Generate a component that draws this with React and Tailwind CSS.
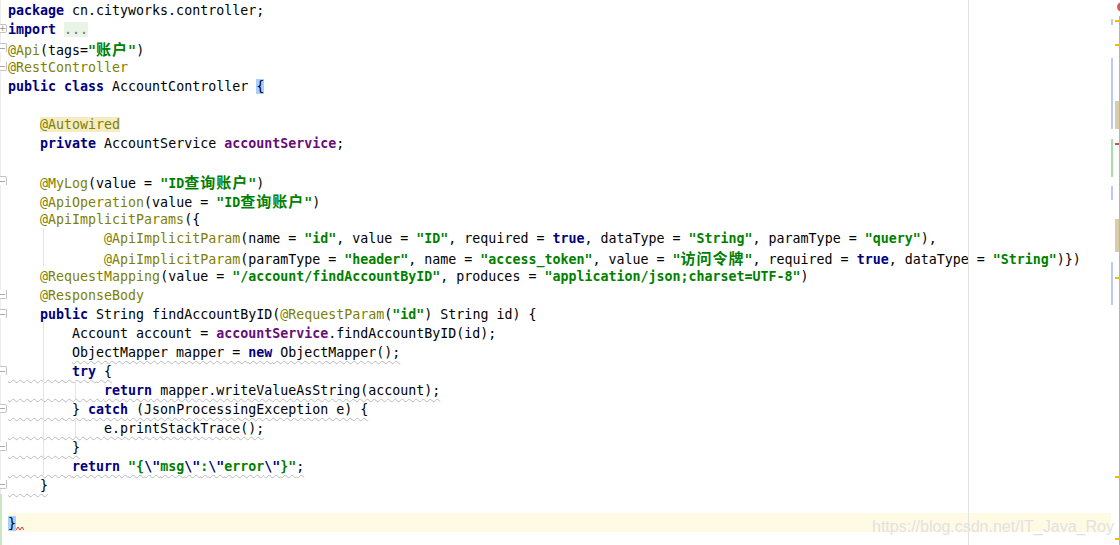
import React from "react";

const STYLE = {
  p: "text-black",
  k: "text-[#000080] font-bold",
  s: "text-[#008000] font-bold",
  a: "text-[#808000]",
  f: "text-[#660e7a] font-bold",
  z: "text-[#008000] font-bold font-['Noto_Sans_CJK_SC',sans-serif] text-[15px] tracking-[1px] leading-[17px]",
  fold: "text-[#707070] bg-[#e9f3e6]",
  auto: "text-[#808000] bg-[#f6ecc3]",
  brace: "text-black bg-[#a6d0ff]",
};

// indent guide backgrounds
const G1 = "bg-[linear-gradient(to_right,transparent_35px,#e4e4e4_35px,#e4e4e4_36px,transparent_36px)]";
const G2 =
  "bg-[linear-gradient(to_right,transparent_35px,#e4e4e4_35px,#e4e4e4_36px,transparent_36px,transparent_67px,#e4e4e4_67px,#e4e4e4_68px,transparent_68px)]";

// w: index of the first token that carries the grey wavy underline
const lines = [
  { t: [["k", "package"], ["p", " cn.cityworks.controller;"]] },
  { t: [["k", "import"], ["p", " "], ["fold", "..."]] },
  { t: [["a", "@Api"], ["p", "(tags="], ["s", '"'], ["z", "账户"], ["s", '"'], ["p", ")"]] },
  { t: [["a", "@RestController"]] },
  { t: [["k", "public class"], ["p", " AccountController "], ["brace", "{"]] },
  { t: [] },
  { t: [["p", "    "], ["auto", "@Autowired"]] },
  { t: [["p", "    "], ["k", "private"], ["p", " AccountService "], ["f", "accountService"], ["p", ";"]] },
  { t: [] },
  { t: [["p", "    "], ["a", "@MyLog"], ["p", "(value = "], ["s", '"ID'], ["z", "查询账户"], ["s", '"'], ["p", ")"]] },
  { t: [["p", "    "], ["a", "@ApiOperation"], ["p", "(value = "], ["s", '"ID'], ["z", "查询账户"], ["s", '"'], ["p", ")"]] },
  { t: [["p", "    "], ["a", "@ApiImplicitParams"], ["p", "({"]] },
  {
    g: G1,
    t: [
      ["p", "            "], ["a", "@ApiImplicitParam"], ["p", "(name = "], ["s", '"id"'],
      ["p", ", value = "], ["s", '"ID"'], ["p", ", required = "], ["k", "true"],
      ["p", ", dataType = "], ["s", '"String"'], ["p", ", paramType = "], ["s", '"query"'], ["p", "),"],
    ],
  },
  {
    g: G1,
    t: [
      ["p", "            "], ["a", "@ApiImplicitParam"], ["p", "(paramType = "], ["s", '"header"'],
      ["p", ", name = "], ["s", '"access_token"'], ["p", ", value = "], ["s", '"'], ["z", "访问令牌"],
      ["s", '"'], ["p", ", required = "], ["k", "true"], ["p", ", dataType = "], ["s", '"String"'], ["p", ")})"],
    ],
  },
  {
    t: [
      ["p", "    "], ["a", "@RequestMapping"], ["p", "(value = "], ["s", '"/account/findAccountByID"'],
      ["p", ", produces = "], ["s", '"application/json;charset=UTF-8"'], ["p", ")"],
    ],
  },
  { t: [["p", "    "], ["a", "@ResponseBody"]] },
  {
    t: [
      ["p", "    "], ["k", "public"], ["p", " String findAccountByID("], ["a", "@RequestParam"],
      ["p", "("], ["s", '"id"'], ["p", ") String id) {"],
    ],
  },
  { g: G1, t: [["p", "        Account account = "], ["f", "accountService"], ["p", ".findAccountByID(id);"]] },
  { g: G1, t: [["p", "        "], ["p", "ObjectMapper mapper = "], ["k", "new"], ["p", " ObjectMapper();"]], w: 1 },
  { g: G1, t: [["p", "        "], ["k", "try"], ["p", " {"]], w: 0 },
  { g: G2, t: [["p", "            "], ["k", "return"], ["p", " mapper.writeValueAsString(account);"]], w: 0 },
  { g: G1, t: [["p", "        } "], ["k", "catch"], ["p", " (JsonProcessingException e) {"]], w: 0 },
  { g: G2, t: [["p", "            e.printStackTrace();"]], w: 0 },
  { g: G1, t: [["p", "        }"]], w: 0 },
  {
    g: G1,
    t: [
      ["p", "        "], ["k", "return"], ["p", " "], ["s", '"{'], ["k", '\\"'], ["s", "msg"], ["k", '\\"'],
      ["s", ":"], ["k", '\\"'], ["s", "error"], ["k", '\\"'], ["s", '}"'], ["p", ";"],
    ],
    w: 0,
  },
  { t: [["p", "    }"]], w: 0 },
  { t: [] },
  { t: [["brace", "}"]], caret: true, squiggle: true },
];

// fold markers in the gutter (line index, kind)
const folds = { 1: "plus", 2: "top", 3: "bottom", 9: "top", 15: "bottom", 16: "top", 19: "top", 21: "mid", 23: "bottom", 25: "bottom" };

function Tok({ type, text }) {
  return <span className={STYLE[type]}>{text}</span>;
}

function CodeLine({ line }) {
  const toks = line.t.map(([type, text], i) => <Tok key={i} type={type} text={text} />);
  let body = toks;
  if (line.w !== undefined) {
    body = (
      <>
        {toks.slice(0, line.w)}
        <span className="underline decoration-wavy decoration-[#bdbdbd] decoration-1 underline-offset-[3px]">
          {toks.slice(line.w)}
        </span>
      </>
    );
  }
  return (
    <div className={`h-[19px] pt-[2px] leading-[17px] whitespace-pre ${line.caret ? "bg-[#fffae3]" : ""} ${line.g || ""}`}>
      {body}
      {line.squiggle && (
        <svg width="8" height="5" viewBox="0 0 8 5" className="inline-block align-[-3px]">
          <polyline points="0,4 2,1 4,4 6,1 8,4" fill="none" stroke="#e03030" strokeWidth="1" />
        </svg>
      )}
    </div>
  );
}

function FoldMark({ kind }) {
  if (!kind) return null;
  const shape =
    kind === "top"
      ? "rounded-t-[2px] border-b-0"
      : kind === "bottom"
      ? "rounded-b-[2px] border-t-0"
      : "rounded-[2px]";
  return (
    <div className={`ml-[-3px] mt-[5px] w-[9px] h-[9px] border border-[#c4c4c4] bg-white flex items-center justify-center ${shape}`}>
      {kind === "plus" && <span className="text-[#909090] text-[9px] leading-[9px] font-['DejaVu_Sans',sans-serif]">+</span>}
      {kind !== "plus" && <span className="w-[5px] h-px bg-[#a8a8a8]" />}
    </div>
  );
}

function Gutter() {
  return (
    <div className="w-[8px] shrink-0 border-l border-[#ececec] flex flex-col">
      {lines.map((_, i) => (
        <div key={i} className={`h-[19px] shrink-0 ${i >= 26 ? "border-l-2 border-[#c9e7c1] -ml-px" : ""}`}>
          <FoldMark kind={folds[i]} />
        </div>
      ))}
      <div className="flex-1 border-l-2 border-[#c9e7c1] -ml-px" />
    </div>
  );
}

const stripeLeft = [
  { top: 19, h: 6, c: "bg-[#c8c8c8]" },
  { top: 58, h: 71, c: "bg-[#bccbf2]" },
  { top: 139, h: 38, c: "bg-[#a8dca8]" },
  { top: 186, h: 14, c: "bg-[#bccbf2]" },
  { top: 262, h: 43, c: "bg-[#bccbf2]" },
];
const stripeRight = [
  { top: 20, h: 2, c: "bg-[#e8c000]" },
  { top: 44, h: 2, c: "bg-[#e8c000]" },
  { top: 101, h: 28, c: "bg-[#d8ccab]" },
  { top: 143, h: 2, c: "bg-[#cc4b4b]" },
  { top: 219, h: 33, c: "bg-[#d8ccab]" },
  { top: 277, h: 2, c: "bg-[#e8c000]" },
  { top: 476, h: 2, c: "bg-[#e8c000]" },
  { top: 538, h: 2, c: "bg-[#e8c000]" },
];

function ErrorStripe() {
  return (
    <div className="relative w-[9px] shrink-0">
      <div className="absolute left-[6px] top-[2px] w-[10px] h-[10px] rounded-full bg-[#d65c5c]" />
      <div className="absolute left-[8px] top-[16px] bottom-0 w-px bg-[#b4b4b4]" />
      {stripeLeft.map((m, i) => (
        <div key={i} className={`absolute left-0 w-[2px] ${m.c}`} style={{ top: m.top, height: m.h }} />
      ))}
      {stripeRight.map((m, i) => (
        <div key={i} className={`absolute left-[4px] w-[4px] ${m.c}`} style={{ top: m.top, height: m.h }} />
      ))}
    </div>
  );
}

export default function App() {
  return (
    <div className="w-[1120px] h-[545px] bg-white flex overflow-hidden font-['DejaVu_Sans_Mono',monospace] text-[13.3px]">
      <Gutter />
      <div className="relative flex-1">
        <div className="flex flex-col">
          {lines.map((line, i) => (
            <CodeLine key={i} line={line} />
          ))}
        </div>

        {/* right margin guide, drawn over the caret line */}
        <div className="absolute left-[960px] top-0 bottom-0 w-px bg-[#e2e2e2]" />

        {/* watermark */}
        <div className="absolute left-[864px] top-[517px] leading-[19px] text-[16px] text-[#e2e2e2] font-['Liberation_Sans',Arial,sans-serif] whitespace-nowrap">
          https://blog.csdn.net/IT_Java_Roy
        </div>
      </div>
      <ErrorStripe />
    </div>
  );
}
